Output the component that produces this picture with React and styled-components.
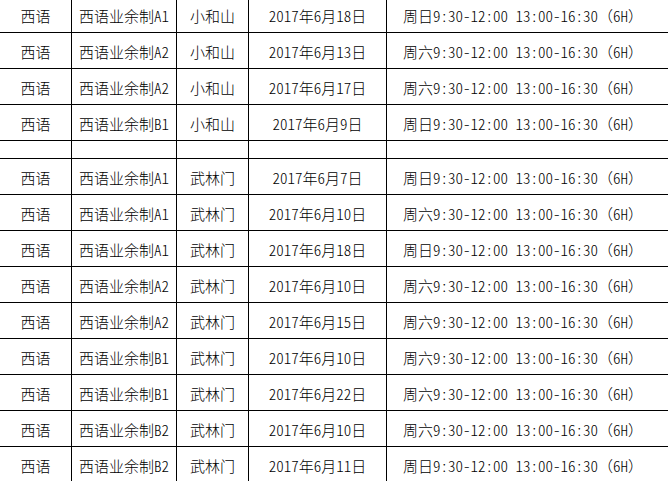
import React from "react";
import styled, { createGlobalStyle } from "styled-components";

const Global = createGlobalStyle`
  html, body { margin: 0; padding: 0; background: #fff; overflow: hidden; }
  body { font-family: "Noto Sans CJK SC", "Noto Sans", sans-serif; }
`;

const Table = styled.div`
  width: 700px;
  margin-top: -3px;
  display: flex;
  flex-direction: column;
  font-family: "Noto Sans CJK SC", sans-serif;
  font-feature-settings: "hwid" 1;
  font-weight: 300;
  font-size: 15px;
  color: #000;
`;

const Row = styled.div`
  display: grid;
  grid-template-columns: 72px 105px 72px 138px 1fr;
  height: ${(p) => (p.$empty ? 18 : 36)}px;
`;

const Cell = styled.div`
  box-sizing: border-box;
  border-right: 1px solid #000;
  border-bottom: 1px solid #000;
  display: flex;
  align-items: center;
  justify-content: ${(p) => (p.$left ? "flex-start" : "center")};
  padding-left: ${(p) => (p.$left ? "16px" : "0")};
  padding-top: 2px;
  white-space: nowrap;
  line-height: 1;
`;

const Wide = styled.span`
  font-feature-settings: normal;
`;

const top = [
  ["西语业余制A1", "小和山", "2017年6月18日", "周日"],
  ["西语业余制A2", "小和山", "2017年6月13日", "周六"],
  ["西语业余制A2", "小和山", "2017年6月17日", "周六"],
  ["西语业余制B1", "小和山", "2017年6月9日", "周日"],
];

const bottom = [
  ["西语业余制A1", "武林门", "2017年6月7日", "周日"],
  ["西语业余制A1", "武林门", "2017年6月10日", "周六"],
  ["西语业余制A1", "武林门", "2017年6月18日", "周日"],
  ["西语业余制A2", "武林门", "2017年6月10日", "周六"],
  ["西语业余制A2", "武林门", "2017年6月15日", "周六"],
  ["西语业余制B1", "武林门", "2017年6月10日", "周六"],
  ["西语业余制B1", "武林门", "2017年6月22日", "周六"],
  ["西语业余制B2", "武林门", "2017年6月10日", "周六"],
  ["西语业余制B2", "武林门", "2017年6月11日", "周日"],
];

const DataRow = ({ r }) => (
  <Row>
    <Cell>西语</Cell>
    <Cell>{r[0]}</Cell>
    <Cell>{r[1]}</Cell>
    <Cell>{r[2]}</Cell>
    <Cell $left>
      {r[3]}9:30-12:00 13:00-16:30<Wide>（</Wide>6H<Wide>）</Wide>
    </Cell>
  </Row>
);

export default function App() {
  return (
    <>
      <Global />
      <Table>
        {top.map((r, i) => (
          <DataRow key={"t" + i} r={r} />
        ))}
        <Row $empty>
          <Cell />
          <Cell />
          <Cell />
          <Cell />
          <Cell />
        </Row>
        {bottom.map((r, i) => (
          <DataRow key={"b" + i} r={r} />
        ))}
      </Table>
    </>
  );
}
